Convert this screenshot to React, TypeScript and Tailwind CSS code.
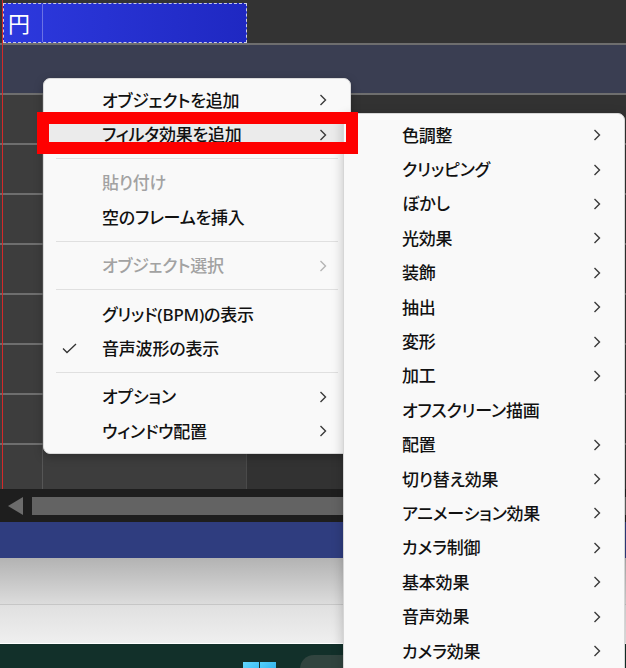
import React from 'react';
import clsx from 'clsx';

type MenuEntry =
  | { kind: 'item'; label: string; sub?: boolean; disabled?: boolean; checked?: boolean; active?: boolean }
  | { kind: 'sep' };

const contextItems: MenuEntry[] = [
  { kind: 'item', label: 'オブジェクトを追加', sub: true },
  { kind: 'item', label: 'フィルタ効果を追加', sub: true, active: true },
  { kind: 'sep' },
  { kind: 'item', label: '貼り付け', disabled: true },
  { kind: 'item', label: '空のフレームを挿入' },
  { kind: 'sep' },
  { kind: 'item', label: 'オブジェクト選択', sub: true, disabled: true },
  { kind: 'sep' },
  { kind: 'item', label: 'グリッド(BPM)の表示' },
  { kind: 'item', label: '音声波形の表示', checked: true },
  { kind: 'sep' },
  { kind: 'item', label: 'オプション', sub: true },
  { kind: 'item', label: 'ウィンドウ配置', sub: true },
];

const filterItems: MenuEntry[] = [
  '色調整',
  'クリッピング',
  'ぼかし',
  '光効果',
  '装飾',
  '抽出',
  '変形',
  '加工',
  'オフスクリーン描画',
  '配置',
  '切り替え効果',
  'アニメーション効果',
  'カメラ制御',
  '基本効果',
  '音声効果',
  'カメラ効果',
].map((label) => ({ kind: 'item' as const, label, sub: label !== 'オフスクリーン描画' }));

const Chevron = ({ muted }: { muted?: boolean }) => (
  <svg width="8" height="12" viewBox="0 0 8 12" fill="none">
    <path
      d="M1.5 1 L6.5 6 L1.5 11"
      className={muted ? 'stroke-[#b4b4b4]' : 'stroke-[#3a3a3a]'}
      strokeWidth="1.4"
    />
  </svg>
);

const Check = () => (
  <svg width="15" height="11" viewBox="0 0 15 11" fill="none">
    <path d="M1 5.5 L5 9.5 L14 1" className="stroke-[#333]" strokeWidth="1.3" />
  </svg>
);

// one menu list, shared by the context menu and its submenu
const MenuList = ({ entries }: { entries: MenuEntry[] }) => (
  <>
    {entries.map((entry, i) =>
      entry.kind === 'sep' ? (
        <div key={i} className="h-[14px] flex items-center px-[12px]">
          <div className="h-px w-full bg-[#e0e0e0]" />
        </div>
      ) : (
        <div
          key={i}
          className={clsx(
            'mx-[5px] h-[34.4px] rounded-[4px] flex items-center',
            entry.active && 'bg-[#ebebeb]'
          )}
        >
          <span className="w-[53px] pl-[13px] flex items-center">{entry.checked && <Check />}</span>
          <span
            className={clsx(
              'flex-1 whitespace-nowrap',
              entry.disabled ? 'text-[#a2a2a2]' : 'text-[#111]'
            )}
          >
            {entry.label}
          </span>
          {entry.sub && (
            <span className="pr-[18px] flex items-center">
              <Chevron muted={entry.disabled} />
            </span>
          )}
        </div>
      )
    )}
  </>
);

const TrackRow = () => (
  <div className="flex h-[48px]">
    <div className="w-[43px] bg-[#3d3d3d] border-r border-[#565656]" />
    <div className="w-[204px] bg-[#3d3d3d] border-r border-[#4a4a4a]" />
    <div className="flex-1 bg-[#323232]" />
  </div>
);

const GridLine = () => <div className="h-[2px] bg-[#6e6e6e]" />;

export default function App() {
  return (
    <div className="relative w-[626px] h-[668px] overflow-hidden bg-[#333] font-['Noto_Sans','Noto_Sans_CJK_JP',sans-serif]">
      {/* Timeline */}
      <div className="h-[489px] flex flex-col">
        <div className="h-[43px] pt-[3px] pl-[3px] bg-[#333]">
          <div className="w-[244px] h-full flex border border-dashed border-[#c9cbe6] bg-linear-to-r from-[#2d39de] to-[#1f28c2]">
            <div className="w-[39px] border-r border-white/30 flex items-center pl-[4px] text-white text-[22px] leading-none">
              円
            </div>
          </div>
        </div>
        <GridLine />
        <div className="h-[48px] bg-[#3a3e52]" />
        <GridLine />
        <TrackRow />
        <GridLine />
        <TrackRow />
        <GridLine />
        <TrackRow />
        <GridLine />
        <TrackRow />
        <GridLine />
        <TrackRow />
        <GridLine />
        <TrackRow />
        <GridLine />
        <TrackRow />
        <GridLine />
        <div className="flex-1 flex">
          <div className="w-[43px] bg-[#3d3d3d] border-r border-[#565656]" />
          <div className="w-[204px] bg-[#3d3d3d] border-r border-[#4a4a4a]" />
          <div className="flex-1 bg-[#323232]" />
        </div>
      </div>

      {/* Horizontal scrollbar */}
      <div className="h-[33px] bg-[#1e1e1e] flex items-center pl-[8px]">
        <svg width="15" height="18" viewBox="0 0 15 18">
          <path d="M15 0 L0 9 L15 18 Z" className="fill-[#6c6c6c]" />
        </svg>
        <div className="ml-[9px] flex-1 h-[18px] bg-[#636363]" />
      </div>

      {/* Lower window */}
      <div className="h-[36px] bg-[#2f3d7f]" />
      <div className="h-[46px] bg-linear-to-b from-[#b3b3b3] to-[#dcdcdc]" />
      <div className="h-px bg-[#c6c6c6]" />
      <div className="h-[38px] bg-linear-to-b from-[#e0e0e0] to-[#efefef]" />
      <div className="h-px bg-white" />

      {/* Taskbar */}
      <div className="h-[24px] bg-[#12302a] flex items-start pl-[243px]">
        <div className="mt-[18px] grid grid-cols-2 gap-px">
          <div className="w-[16px] h-[16px] bg-linear-to-br from-[#62d8ff] to-[#2fb4ee]" />
          <div className="w-[16px] h-[16px] bg-linear-to-br from-[#52d0fb] to-[#28a8e6]" />
        </div>
        <div className="ml-[24px] mt-[11px] w-[70px] h-[30px] rounded-l-[14px] bg-[#31443f]" />
      </div>

      {/* Playhead */}
      <div className="absolute left-[2px] top-0 w-px h-[489px] bg-[#d42a2a]" />

      {/* Context menu */}
      <div className="absolute left-[43px] top-[78px] w-[308px] py-[4px] rounded-[7px] border border-[#dadada] bg-[#f9f9f9] shadow-[0_3px_10px_rgba(0,0,0,0.25)] text-[17px] font-medium leading-none tracking-[-0.2px] [font-feature-settings:'palt']">
        <MenuList entries={contextItems} />
      </div>

      {/* Filter submenu */}
      <div className="absolute left-[343px] top-[113px] w-[282px] h-[580px] pt-[4px] rounded-[7px] border border-[#d6d6d6] bg-[#f9f9f9] shadow-[0_3px_12px_rgba(0,0,0,0.22)] text-[17px] font-medium leading-none tracking-[-0.2px] [font-feature-settings:'palt']">
        <MenuList entries={filterItems} />
      </div>

      {/* Highlight frame */}
      <div className="absolute left-[37px] top-[112px] w-[321px] h-[42px] border-[12px] border-[#fe0000]" />
    </div>
  );
}
